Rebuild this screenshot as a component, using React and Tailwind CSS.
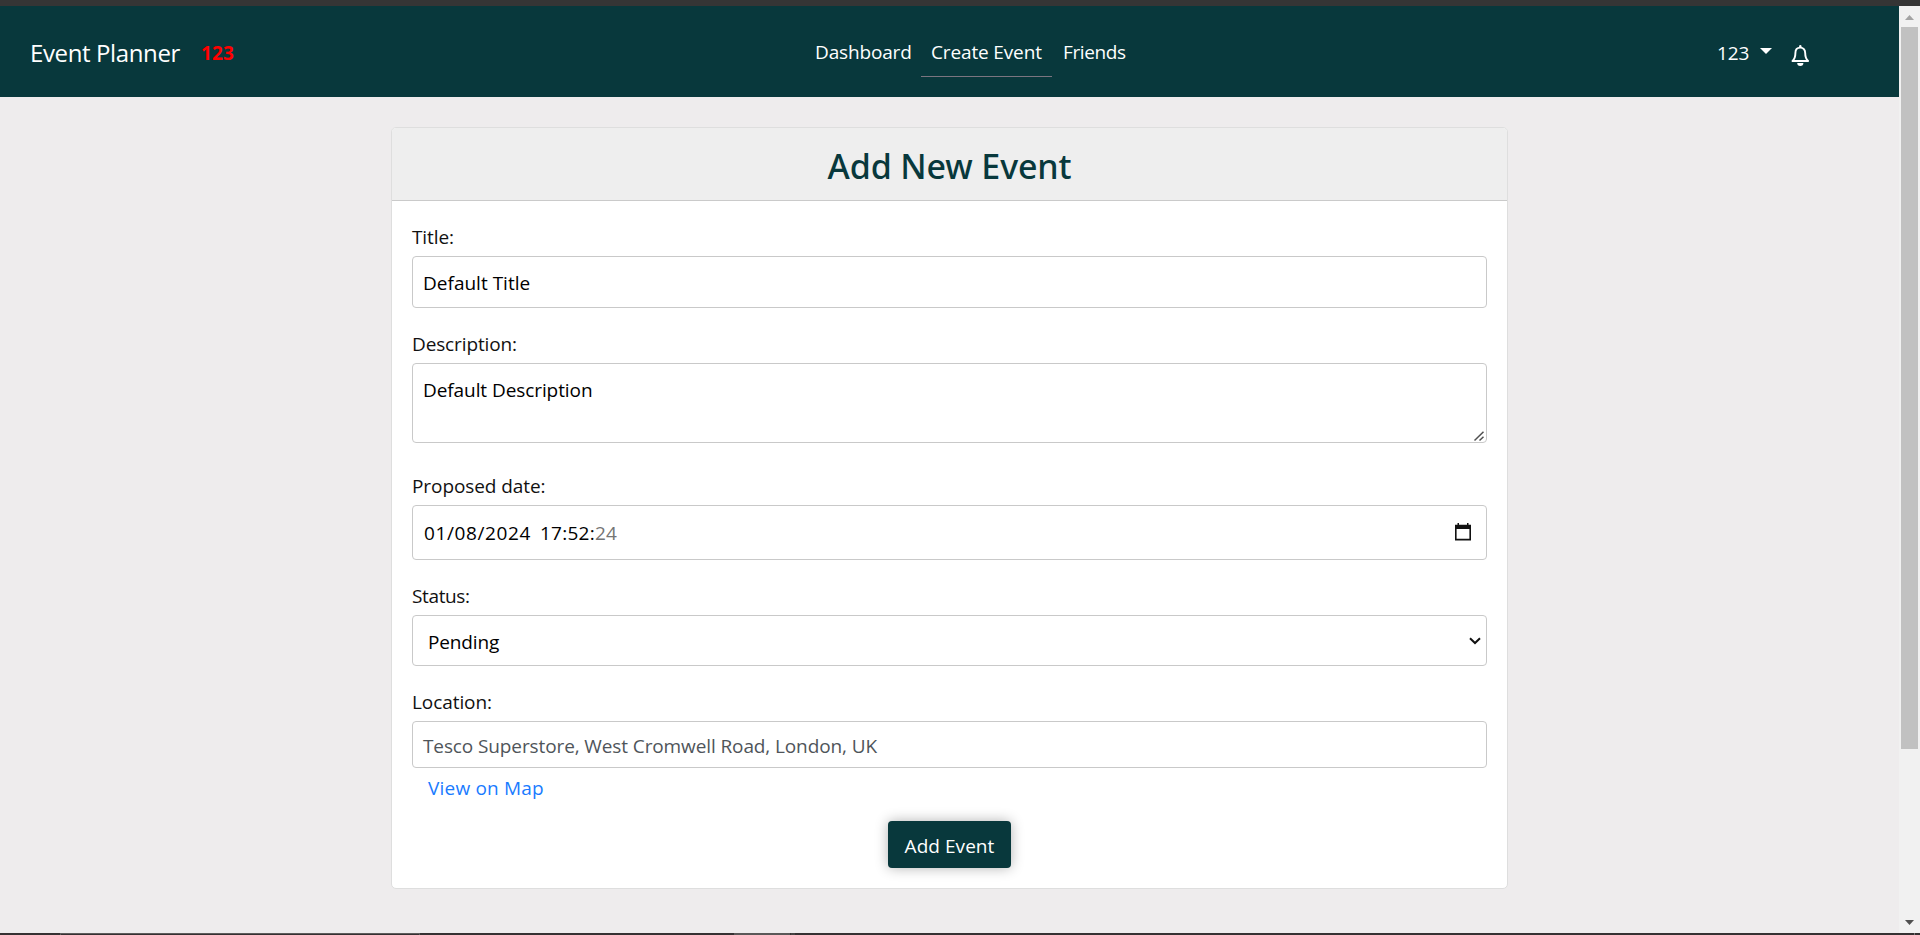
import React from "react";

function Bell({ className }) {
  return (
    <svg className={className} width="20" height="23" viewBox="0 0 20 23" fill="none">
      <path
        d="M10.300 3.600C7.200 3.600 5.400 5.800 5.400 9C5.400 12.600 4.700 15 2.500 17H18.100C15.900 15 15.200 12.600 15.200 9C15.200 5.800 13.400 3.600 10.300 3.600Z"
        stroke="white"
        strokeWidth="1.9"
        strokeLinejoin="round"
      />
      <path d="M9.100 3.200V2.300a1.200 1.200 0 0 1 2.400 0V3.200z" fill="white" />
      <path d="M7.200 19h6.200a3.100 3 0 0 1-6.200 0z" fill="white" />
    </svg>
  );
}

function Navbar() {
  return (
    <nav className="flex h-[91px] shrink-0 items-start bg-[#08383c] text-[19px] leading-[30px] text-white">
      <div className="flex w-[815px] pl-[30px]">
        <span className="mt-[29px] w-[171px] text-[24px] leading-[36px] tracking-[-0.38px]">Event Planner</span>
        <span className="mt-[32px] font-bold tracking-[0.14px] text-[#ff0000]">123</span>
      </div>
      <div className="flex w-[902px] pt-[31px]">
        <a className="w-[106px] tracking-[-0.15px]">Dashboard</a>
        <a className="h-[40px] w-[131px] border-b border-[#7b7580] pl-[10px] tracking-[-0.14px]">Create Event</a>
        <a className="pl-[11px] tracking-[-0.38px]">Friends</a>
      </div>
      <div className="flex pt-[32px]">
        <span className="w-[43px] tracking-[-0.11px]">123</span>
        <span className="mt-[10px] h-0 w-0 border-x-[6px] border-t-[6px] border-x-transparent border-t-white" />
        <Bell className="mt-[6px] ml-[18px]" />
      </div>
    </nav>
  );
}

function Label({ children, className = "" }) {
  return <label className={"mb-[5px] block h-[30px] pt-px " + className}>{children}</label>;
}

function EventForm() {
  const box = "flex w-full items-center rounded-[4px] border border-[#c9c9c9] bg-white px-[10px] text-black";
  return (
    <form className="flex flex-col px-5 pt-5 pb-5 text-[19px] leading-[30px] text-[#111]">
      <Label className="tracking-[-0.1px]">Title:</Label>
      <div className={box + " mb-5 h-[52px] pt-[2px] tracking-[0.01px]"}>Default Title</div>

      <Label className="tracking-[-0.13px]">Description:</Label>
      <div className="relative mb-[27px]">
        <textarea
          className="block h-[80px] w-full resize-none rounded-[4px] border border-[#c9c9c9] bg-white px-[10px] py-[11px] tracking-[-0.08px] text-black outline-none"
          defaultValue="Default Description"
        />
        <svg className="absolute right-[2px] bottom-[1px]" width="12" height="12" viewBox="0 0 12 12">
          <path d="M1.500 10.500L10.500 1.800M6.500 10.500L10.500 6.800" fill="none" stroke="#505050" strokeWidth="1.5" />
        </svg>
      </div>

      <Label className="tracking-[-0.08px]">Proposed date:</Label>
      <div className={box + " mb-5 h-[55px] pt-px"}>
        <span className="w-[117px] pl-px tracking-[0.6px]">01/08/2024</span>
        <span className="tracking-[0.24px]">
          17:52:<span className="text-[#757575]">24</span>
        </span>
        <svg className="mr-[4px] mb-[2px] ml-auto" width="18" height="20" viewBox="0 0 18 20">
          <path d="M1.8 3.6h14.4v14H1.8z" fill="none" stroke="#111" strokeWidth="1.6" />
          <path d="M1 3h16v4H1zM3.5 1H5v3H3.5zM13 1h1.500v3H13z" fill="#111" />
        </svg>
      </div>

      <Label className="tracking-[-0.37px]">Status:</Label>
      <div className={box + " mb-5 h-[51px]"}>
        <span className="pt-[2px] pl-[5px] tracking-[-0.14px]">Pending</span>
        <svg className="-mr-[5px] ml-auto" width="12" height="8" viewBox="0 0 12 8">
          <path d="M1 1.200l5 4.800 5-4.800" fill="none" stroke="#111" strokeWidth="2" />
        </svg>
      </div>

      <Label className="tracking-[-0.08px]">Location:</Label>
      <div className={box + " h-[47px] pt-[2px] text-[#4f555a]! tracking-[-0.11px]"}>
        Tesco Superstore, West Cromwell Road, London, UK
      </div>
      <a className="mt-[5px] h-[30px] pl-[16px] tracking-[0.2px] text-[#1a7bff]">View on Map</a>

      <button
        type="button"
        className="mt-[18px] h-[47px] w-[123px] self-center rounded-[4px] bg-[#08383c] pt-[2px] tracking-[0.05px] text-white shadow-[0_0_13px_rgba(0,0,0,0.3)]"
      >
        Add Event
      </button>
    </form>
  );
}

function Scrollbar() {
  return (
    <div className="flex w-[21px] shrink-0 flex-col items-center bg-[#f1f1f1]">
      <svg className="mt-[9px] shrink-0" width="9" height="5" viewBox="0 0 9 5">
        <path d="M4.500 0L9 5H0z" fill="#a3a3a3" />
      </svg>
      <div className="mt-[7px] h-[722px] w-[17px] shrink-0 bg-[#c1c1c1]" />
      <svg className="mt-auto mb-[8px] shrink-0" width="9" height="5" viewBox="0 0 9 5">
        <path d="M0 0h9L4.500 5z" fill="#505050" />
      </svg>
    </div>
  );
}

export default function App() {
  return (
    <div className="flex h-[935px] w-[1920px] flex-col overflow-hidden bg-[#eeeced] font-['Open_Sans',sans-serif]">
      <div className="h-[6px] shrink-0 bg-[#353535]" />
      <div className="flex h-[927px] shrink-0">
        <div className="flex w-[1899px] flex-col">
          <Navbar />
          <main className="mt-[30px] ml-[391px] flex h-[762px] w-[1117px] flex-col rounded-[5px] border border-[#dedede] bg-white">
            <header className="flex h-[73px] shrink-0 items-center justify-center rounded-t-[4px] border-b border-[#cacaca] bg-[#eeeeee] pt-[4px]">
              <h1 className="font-['Noto_Sans',sans-serif] text-[34px] leading-[42px] font-medium tracking-[-0.12px] text-[#08383c]">
                Add New Event
              </h1>
            </header>
            <EventForm />
          </main>
        </div>
        <Scrollbar />
      </div>
      <div className="flex h-[2px] shrink-0 bg-[#353132]">
        <div className="ml-[60px] h-[2px] w-[360px] border-x border-t border-[#5e5c5c]" />
        <div className="ml-[314px] w-[56px] bg-[#5a5858]" />
        <div className="ml-px w-[4px] bg-[#454343]" />
        <div className="ml-[1119px] w-px bg-[#777777]" />
      </div>
    </div>
  );
}
